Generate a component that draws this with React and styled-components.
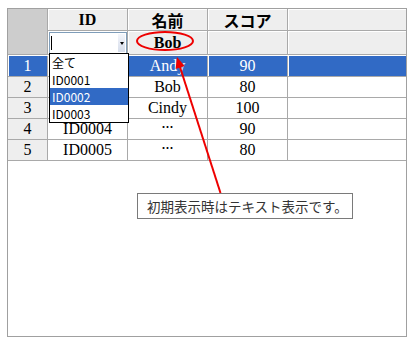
import React from 'react';
import styled, { createGlobalStyle } from 'styled-components';

const GlobalStyle = createGlobalStyle`
  html, body {
    margin: 0;
    padding: 0;
    background: #ffffff;
  }
  body {
    font-family: "Liberation Serif", "Noto Sans CJK JP", serif;
  }
`;

const COLS = '39px 79px 79px 79px 118px';
const BLUE = '#316ac5';

const Stage = styled.div`
  position: relative;
  width: 415px;
  height: 346px;
  padding: 8px 0 0 7px;
  box-sizing: border-box;
  overflow: hidden;
`;

const Grid = styled.div`
  width: 400px;
  height: 329px;
  box-sizing: border-box;
  border: 1px solid #a0a0a0;
  background: #ffffff;
`;

const Head = styled.div`
  display: grid;
  grid-template-columns: ${COLS};
  grid-template-rows: 21px 23px;
  gap: 1px;
  background: #a9a9a9;
  border-bottom: 1px solid #a9a9a9;
`;

const Corner = styled.div`
  grid-row: span 2;
  background: #cdcdcd;
`;

const HeadCell = styled.div`
  display: flex;
  align-items: center;
  justify-content: center;
  background: #eeeeee;
  box-shadow: inset 1px 1px 0 #ffffff;
  font-size: 16px;
  font-weight: bold;
  color: #000;
`;

const FilterCell = styled(HeadCell)`
  position: relative;
  justify-content: ${(p) => (p.$left ? 'flex-start' : 'center')};
  align-items: ${(p) => (p.$left ? 'flex-start' : 'center')};
  padding: ${(p) => (p.$left ? '1px 0 0 1px' : '0')};
`;

const Body = styled.div`
  padding-top: 1px;
`;

const Row = styled.div`
  display: grid;
  grid-template-columns: ${COLS};
  grid-template-rows: 20px;
  gap: 1px;
  background: #a9a9a9;
  border-bottom: 1px solid #a9a9a9;
`;

const Cell = styled.div`
  display: flex;
  align-items: center;
  justify-content: center;
  background: ${(p) => (p.$selected ? BLUE : p.$label ? '#eeeeee' : '#ffffff')};
  color: ${(p) => (p.$selected ? '#ffffff' : '#000000')};
  box-shadow: ${(p) => (p.$selected ? 'inset 1px 0 0 #ffffff' : 'none')};
  font-size: 16px;
  line-height: 20px;
  white-space: nowrap;
`;

const Dots = styled.span`
  font-family: "Noto Sans CJK JP", sans-serif;
  font-size: 12px;
  font-weight: bold;
  line-height: 12px;
  margin-top: -4px;
`;

const Combo = styled.div`
  position: relative;
  z-index: 3;
  width: 80px;
  height: 22px;
  box-sizing: border-box;
  border: 1px solid #7f9db9;
  background: #ffffff;
  display: flex;
  align-items: center;
  justify-content: space-between;
  padding: 0 1px;
`;

const Caret = styled.span`
  width: 1px;
  height: 14px;
  background: #000;
`;

const DropButton = styled.span`
  width: 7px;
  height: 18px;
  background: linear-gradient(#f4f6fb, #d5dcea);
  display: flex;
  align-items: center;
  justify-content: center;

  &::after {
    content: '';
    border-left: 2px solid transparent;
    border-right: 2px solid transparent;
    border-top: 3px solid #000;
  }
`;

const DropList = styled.ul`
  position: absolute;
  top: 100%;
  left: -1px;
  width: 80px;
  margin: 0;
  padding: 0;
  list-style: none;
  box-sizing: border-box;
  border: 1px solid #000;
  background: #ffffff;
`;

const Option = styled.li`
  height: 17px;
  line-height: 17px;
  padding-left: 2px;
  font-family: "Noto Sans CJK JP", sans-serif;
  font-weight: normal;
  font-size: 12px;
  background: ${(p) => (p.$active ? BLUE : 'transparent')};
  color: ${(p) => (p.$active ? '#ffffff' : '#000000')};
`;

const Callout = styled.div`
  position: absolute;
  left: 137px;
  top: 193px;
  width: 216px;
  height: 26px;
  box-sizing: border-box;
  border: 1px solid #7a7a7a;
  background: #ffffff;
  padding-left: 9px;
  display: flex;
  align-items: center;
  font-family: "Noto Sans CJK JP", sans-serif;
  font-size: 13.5px;
  color: #333333;
  white-space: nowrap;
  z-index: 4;
`;

const Marks = styled.svg`
  position: absolute;
  left: 0;
  top: 0;
  z-index: 5;
  pointer-events: none;
`;

// ID cells of rows 1-3 sit under the open drop list
const rows = [
  { n: 1, id: '', name: 'Andy', score: 90 },
  { n: 2, id: '', name: 'Bob', score: 80 },
  { n: 3, id: '', name: 'Cindy', score: 100 },
  { n: 4, id: 'ID0004', name: null, score: 90 },
  { n: 5, id: 'ID0005', name: null, score: 80 },
];

const options = ['全て', 'ID0001', 'ID0002', 'ID0003'];

const App = () => {
  return (
    <Stage>
      <GlobalStyle />
      <Grid>
        <Head>
          <Corner />
          <HeadCell>ID</HeadCell>
          <HeadCell>名前</HeadCell>
          <HeadCell>スコア</HeadCell>
          <HeadCell />
          <FilterCell $left>
            <Combo>
              <Caret />
              <DropButton />
              <DropList>
                {options.map((o) => (
                  <Option key={o} $active={o === 'ID0002'}>{o}</Option>
                ))}
              </DropList>
            </Combo>
          </FilterCell>
          <FilterCell>Bob</FilterCell>
          <FilterCell />
          <FilterCell />
        </Head>
        <Body>
          {rows.map((r) => {
            const sel = r.n === 1;
            return (
              <Row key={r.n}>
                <Cell $label $selected={sel}>{r.n}</Cell>
                <Cell $selected={sel}>{r.id}</Cell>
                <Cell $selected={sel}>{r.name ?? <Dots>…</Dots>}</Cell>
                <Cell $selected={sel}>{r.score}</Cell>
                <Cell $selected={sel} />
              </Row>
            );
          })}
        </Body>
      </Grid>
      <Callout>初期表示時はテキスト表示です。</Callout>
      <Marks width="415" height="346" viewBox="0 0 415 346">
        <ellipse cx="165" cy="41" rx="28" ry="9" fill="none" stroke="#ee0000" strokeWidth="2" />
        <line x1="220.5" y1="193" x2="179" y2="64" stroke="#ee0000" strokeWidth="2" />
        <polygon points="177,57 184.6,66.1 175.6,68.9" fill="#ee0000" />
      </Marks>
    </Stage>
  );
};

export default App;
